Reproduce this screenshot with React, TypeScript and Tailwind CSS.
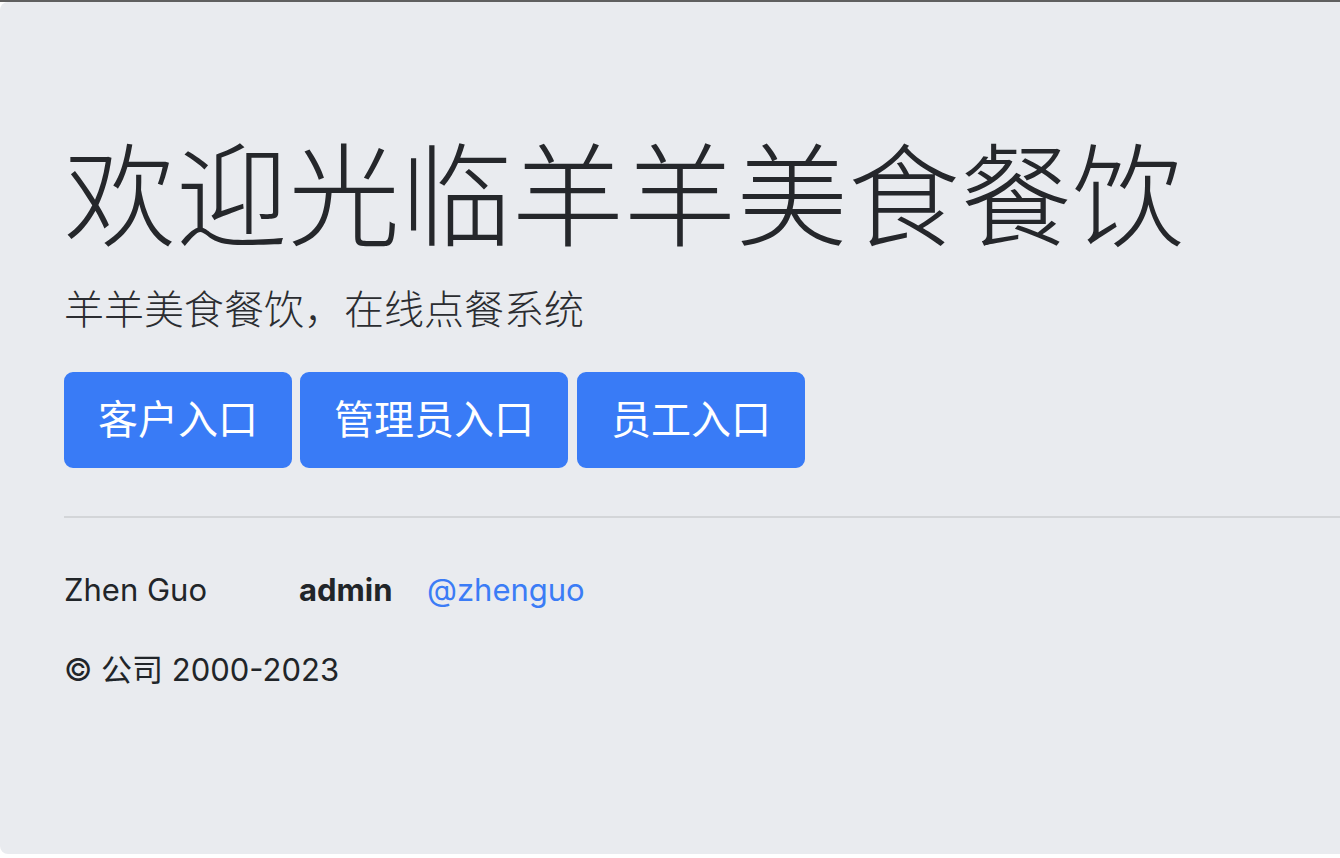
import React from "react";

export default function App() {
  const font = { fontFamily: 'Inter, "Noto Sans CJK SC", sans-serif' };
  return (
    <div className="w-[1340px] h-[858px] overflow-hidden bg-white" style={font}>
      <div className="h-[2px] bg-[#5f5f5f]" />
      <div className="w-[1500px] bg-[#e9ebef] rounded-[8px] px-[64px] pt-[128px] pb-[128px] text-[#212529]">
        <h1 className="text-[112px] font-light leading-[134px] mb-[16px] text-[#25272b]">
          欢迎光临羊羊美食餐饮
        </h1>
        <p className="text-[40px] font-light leading-[60px] mb-[32px] text-[#2b2d31]">
          羊羊美食餐饮，在线点餐系统
        </p>
        <div className="flex gap-[8px]">
          {["客户入口", "管理员入口", "员工入口"].map((t) => (
            <button
              key={t}
              className="bg-[#397bf6] border-2 border-[#397bf6] text-white text-[40px] leading-[60px] px-[32px] py-[16px] rounded-[9px] last:ml-px"
            >
              {t}
            </button>
          ))}
        </div>
        <hr className="my-[48px] border-0 border-t-2 border-[#d3d5d8] w-[1372px]" />
        <div className="flex text-[31px] leading-[48px]">
          <span className="w-[235px]">Zhen Guo</span>
          <span className="w-[128px] font-bold">admin</span>
          <span className="text-[#3b7cf6]">@zhenguo</span>
        </div>
        <p className="text-[31px] leading-[48px] mt-[32px] mb-[32px]">© 公司 2000-2023</p>
      </div>
    </div>
  );
}
